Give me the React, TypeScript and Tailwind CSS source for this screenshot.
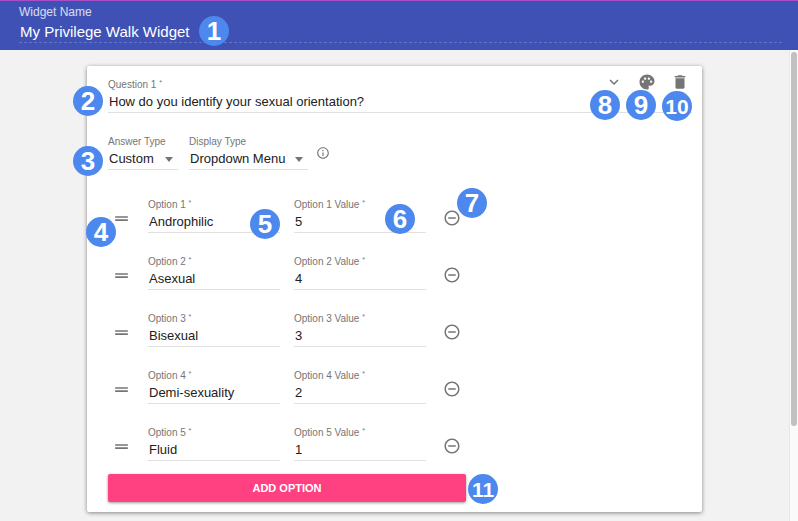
import { useState, type ReactNode } from "react";
import {
  MdDelete,
  MdDragHandle,
  MdExpandMore,
  MdInfoOutline,
  MdPalette,
  MdRemoveCircleOutline,
} from "react-icons/md";

const initialOptions = [
  { name: "Androphilic", value: "5" },
  { name: "Asexual", value: "4" },
  { name: "Bisexual", value: "3" },
  { name: "Demi-sexuality", value: "2" },
  { name: "Fluid", value: "1" },
];

function Badge({ n, className }: { n: number; className: string }) {
  return (
    <span
      className={`pointer-events-none absolute z-10 flex size-[30px] items-center justify-center rounded-full bg-[#4d88ee] font-bold leading-none text-white ${
        n > 9 ? "text-[21px]" : "text-[26px]"
      } ${className}`}
    >
      {n}
    </span>
  );
}

function TextField({
  id,
  label,
  value,
  onChange,
  className = "",
  children,
}: {
  id: string;
  label: string;
  value: string;
  onChange: (v: string) => void;
  className?: string;
  children?: ReactNode;
}) {
  return (
    <div className={`relative flex flex-col ${className}`}>
      <label htmlFor={id} className="h-3 text-[10px] leading-3 text-[#757575]">
        {label} <span className="align-top text-[7px] leading-none">*</span>
      </label>
      <input
        id={id}
        value={value}
        onChange={(e) => onChange(e.target.value)}
        className="h-[22px] w-full border-b border-[#e0e0e0] bg-transparent pl-px text-[13px] text-[#212121] outline-none"
      />
      {children}
    </div>
  );
}

function SelectField({
  id,
  label,
  choices,
  className,
}: {
  id: string;
  label: string;
  choices: string[];
  className: string;
}) {
  return (
    <div className={`relative flex flex-col ${className}`}>
      <label htmlFor={id} className="h-3 text-[10px] leading-3 text-[#757575]">
        {label}
      </label>
      <select
        id={id}
        className="h-[22px] w-full appearance-none border-b border-[#e0e0e0] bg-transparent pt-px pl-px text-[13px] text-[#212121] outline-none"
      >
        {choices.map((c) => (
          <option key={c}>{c}</option>
        ))}
      </select>
      <span className="pointer-events-none absolute right-[5px] bottom-2 border-x-4 border-t-[5px] border-x-transparent border-t-[#757575]" />
    </div>
  );
}

export default function App() {
  const [widgetName, setWidgetName] = useState("My Privilege Walk Widget");
  const [question, setQuestion] = useState("How do you identify your sexual orientation?");
  const [options, setOptions] = useState(initialOptions);

  const edit = (i: number, patch: Partial<(typeof initialOptions)[number]>) =>
    setOptions(options.map((o, j) => (j === i ? { ...o, ...patch } : o)));

  return (
    <div className="flex h-screen flex-col overflow-hidden bg-[#f2f2f2] font-['Liberation_Sans',Arial,sans-serif]">
      <header className="relative flex flex-col border-t border-[#a64fc8] bg-[#3f51b5] pt-[3px] pr-4 pb-[7px] pl-[19px] text-white">
        <label htmlFor="widget-name" className="text-xs leading-4 text-white/80">
          Widget Name
        </label>
        <input
          id="widget-name"
          value={widgetName}
          onChange={(e) => setWidgetName(e.target.value)}
          className="h-[23px] w-full border-b border-dashed border-white/20 bg-transparent pl-px text-[15px] outline-none"
        />
        <Badge n={1} className="top-[15px] left-[199px]" />
      </header>

      <div className="flex min-h-0 flex-1">
        <main className="min-w-0 flex-1 px-[87px] pt-4">
          <section className="rounded-xs bg-white px-[21px] pt-[13px] pb-[10px] shadow-[0_1px_4px_rgba(0,0,0,0.45)]">
            <div className="relative">
              <TextField
                id="question"
                label="Question 1"
                value={question}
                onChange={setQuestion}
                className="-mr-[11px]"
              />
              <Badge n={2} className="top-[7px] -left-[35px]" />
              <div className="absolute -top-[6px] -right-2 flex gap-[15px] text-[#757575]">
                <button aria-label="Collapse question" className="relative">
                  <MdExpandMore className="size-[18px]" />
                  <Badge n={8} className="top-[17px] -left-[15px]" />
                </button>
                <button aria-label="Question colors" className="relative">
                  <MdPalette className="size-[18px]" />
                  <Badge n={9} className="top-[17px] -left-3" />
                </button>
                <button aria-label="Delete question" className="relative">
                  <MdDelete className="size-[18px]" />
                  <Badge n={10} className="top-[18px] -left-[9px]" />
                </button>
              </div>
            </div>

            <div className="relative mt-[23px] flex gap-[11px]">
              <SelectField
                id="answer-type"
                label="Answer Type"
                choices={["Custom", "Likert"]}
                className="w-[70px]"
              />
              <SelectField
                id="display-type"
                label="Display Type"
                choices={["Dropdown Menu", "Radio Buttons"]}
                className="w-[119px]"
              />
              <button aria-label="About display types" className="-ml-[3px] self-center text-[#757575]">
                <MdInfoOutline className="size-[14px]" />
              </button>
              <Badge n={3} className="top-[10px] -left-[35px]" />
            </div>

            <ul className="mt-[29px] flex flex-col gap-[23px]">
              {options.map((o, i) => (
                <li key={i} className="relative flex items-center">
                  <button aria-label={`Reorder option ${i + 1}`} className="mt-1 mr-[17px] ml-1 text-[#757575]">
                    <MdDragHandle className="size-[19px]" />
                  </button>
                  <TextField
                    id={`option-${i}`}
                    label={`Option ${i + 1}`}
                    value={o.name}
                    onChange={(name) => edit(i, { name })}
                    className="w-[132px]"
                  >
                    {i === 0 && <Badge n={5} className="top-[10px] right-0" />}
                  </TextField>
                  <TextField
                    id={`value-${i}`}
                    label={`Option ${i + 1} Value`}
                    value={o.value}
                    onChange={(value) => edit(i, { value })}
                    className="ml-[14px] w-[132px]"
                  >
                    {i === 0 && <Badge n={6} className="top-[5px] right-[11px]" />}
                  </TextField>
                  <button
                    aria-label={`Remove option ${i + 1}`}
                    onClick={() => setOptions(options.filter((_, j) => j !== i))}
                    className="relative mt-1 ml-[17px] text-[#757575]"
                  >
                    <MdRemoveCircleOutline className="size-[18px]" />
                    {i === 0 && <Badge n={7} className="-top-[21px] left-[14px]" />}
                  </button>
                  {i === 0 && <Badge n={4} className="top-[18px] -left-[22px]" />}
                </li>
              ))}
            </ul>

            <div className="relative mt-[13px] w-[358px]">
              <button
                onClick={() => setOptions([...options, { name: "", value: "" }])}
                className="block h-7 w-full rounded-xs bg-[#ff4081] text-[11px] font-bold text-white shadow-[0_1px_3px_rgba(0,0,0,0.4)]"
              >
                ADD OPTION
              </button>
              <Badge n={11} className="top-0 -right-8" />
            </div>
          </section>
        </main>
        <div className="w-[9px] shrink-0 border-l border-[#e8e8e8] bg-[#fafafa] pt-0.5 pl-px">
          <div className="h-[374px] w-[6px] rounded-full bg-[#c1c1c1]" />
        </div>
      </div>
    </div>
  );
}
